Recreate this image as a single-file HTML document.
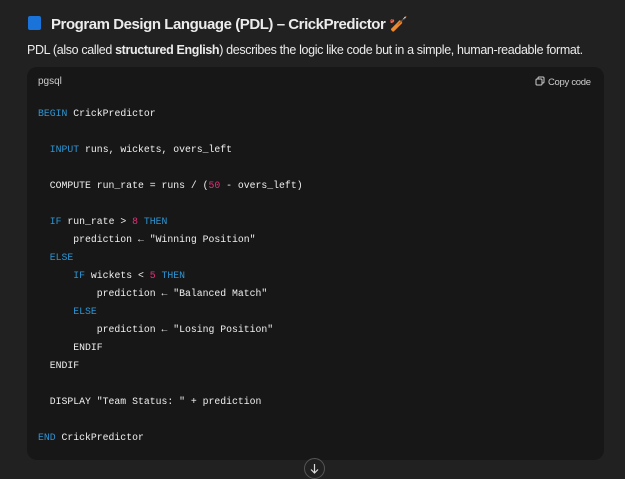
<html><head><style>
body{margin:0;background:#212121;width:625px;height:476px;overflow:hidden;font-family:"Liberation Sans","DejaVu Sans",sans-serif;color:#ececec;position:relative}
.t{position:absolute;left:28px;top:15px;font-size:15px;font-weight:bold;white-space:nowrap;letter-spacing:-0.45px}
.sq{display:inline-block;width:13px;height:14px;background:#1a73d9;border-radius:2px;vertical-align:-1px;margin-right:10px}
.p{position:absolute;left:27px;top:43px;font-size:12.5px;white-space:nowrap;letter-spacing:-0.35px}
.cb{position:absolute;left:27px;top:67px;width:577px;height:393px;background:#171717;border-radius:10px}
.lang{position:absolute;left:38px;top:76px;font-size:10px;color:#cdcdcd}
.copy{position:absolute;left:535px;top:76px;font-size:9.5px;color:#cdcdcd;letter-spacing:-0.3px}
pre{position:absolute;left:38px;top:105px;margin:0;font-family:"Liberation Mono","DejaVu Sans Mono",monospace;font-size:9.8px;line-height:18px;color:#f0f0f0}
.k{color:#2e95d3}.n{color:#df3079}
.dn{position:absolute;left:304px;top:458px;width:21px;height:21px;border:1px solid #555;border-radius:50%;background:#212121;box-sizing:border-box}
</style></head><body>
<div class="t"><span class="sq"></span>Program Design Language (PDL) – CrickPredictor <span style="color:#e8a080">🏏</span></div>
<div class="p">PDL (also called <b>structured English</b>) describes the logic like code but in a simple, human-readable format.</div>
<div class="cb"></div>
<div class="lang">pgsql</div>
<div class="copy"><svg width="10" height="10" viewBox="0 0 10 10" style="vertical-align:-1px;margin-right:3px"><rect x="3" y="1" width="6" height="6" rx="1" fill="none" stroke="#cdcdcd"/><rect x="1" y="3" width="6" height="6" rx="1" fill="#171717" stroke="#cdcdcd"/></svg>Copy code</div>
<pre><span class="k">BEGIN</span> CrickPredictor

  <span class="k">INPUT</span> runs, wickets, overs_left

  COMPUTE run_rate = runs / (<span class="n">50</span> - overs_left)

  <span class="k">IF</span> run_rate &gt; <span class="n">8</span> <span class="k">THEN</span>
      prediction ← "Winning Position"
  <span class="k">ELSE</span>
      <span class="k">IF</span> wickets &lt; <span class="n">5</span> <span class="k">THEN</span>
          prediction ← "Balanced Match"
      <span class="k">ELSE</span>
          prediction ← "Losing Position"
      ENDIF
  ENDIF

  DISPLAY "Team Status: " + prediction

<span class="k">END</span> CrickPredictor</pre>
<div class="dn"><svg width="19" height="19" viewBox="0 0 19 19"><path d="M9.5 5v9M6 10.5l3.5 3.5 3.5-3.5" fill="none" stroke="#ddd" stroke-width="1.2"/></svg></div>
</body></html>
